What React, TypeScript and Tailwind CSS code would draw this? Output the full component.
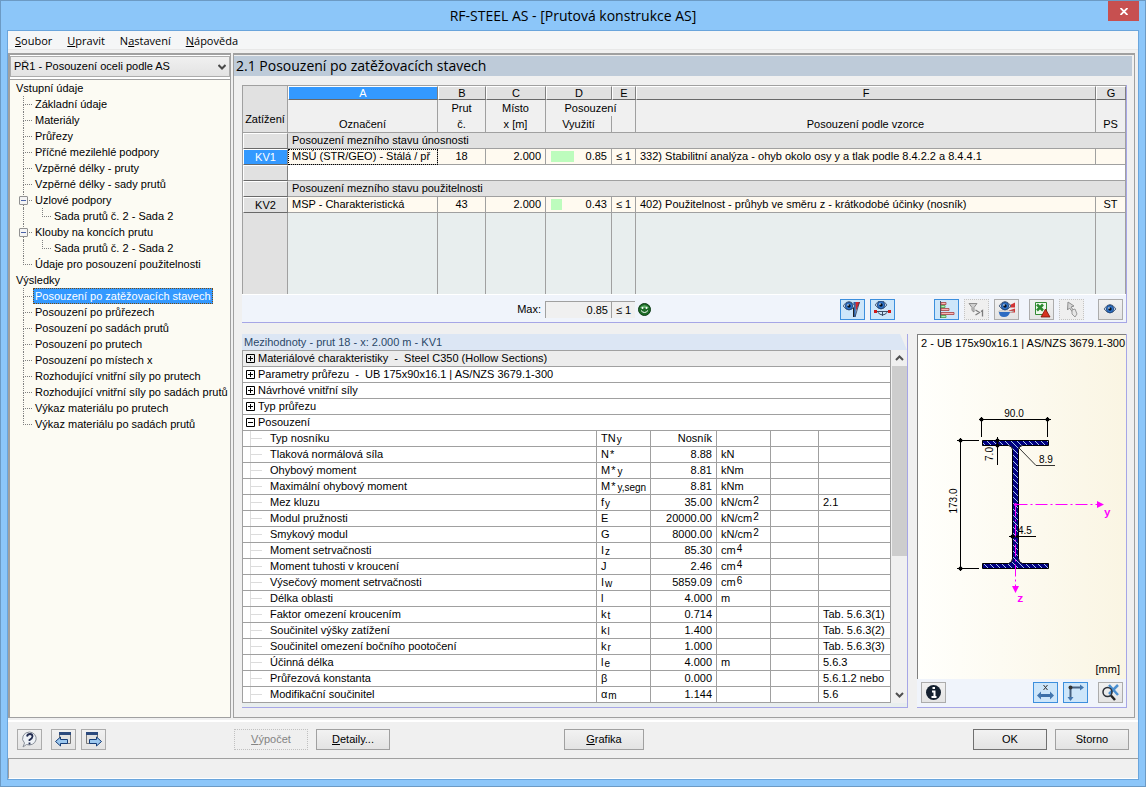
import { useState } from "react"
import type { ReactNode } from "react"
import clsx from "clsx"

type TreeNode = { label: string; children?: string[] }

const inputData: TreeNode[] = [
  { label: "Základní údaje" },
  { label: "Materiály" },
  { label: "Průřezy" },
  { label: "Příčné mezilehlé podpory" },
  { label: "Vzpěrné délky - pruty" },
  { label: "Vzpěrné délky - sady prutů" },
  { label: "Uzlové podpory", children: ["Sada prutů č. 2 - Sada 2"] },
  { label: "Klouby na koncích prutu", children: ["Sada prutů č. 2 - Sada 2"] },
  { label: "Údaje pro posouzení použitelnosti" },
]

const results: TreeNode[] = [
  { label: "Posouzení po zatěžovacích stavech" },
  { label: "Posouzení po průřezech" },
  { label: "Posouzení po sadách prutů" },
  { label: "Posouzení po prutech" },
  { label: "Posouzení po místech x" },
  { label: "Rozhodující vnitřní síly po prutech" },
  { label: "Rozhodující vnitřní síly po sadách prutů" },
  { label: "Výkaz materiálu po prutech" },
  { label: "Výkaz materiálu po sadách prutů" },
]

const groups = ["Materiálové charakteristiky  -  Steel C350 (Hollow Sections)", "Parametry průřezu  -  UB 175x90x16.1 | AS/NZS 3679.1-300", "Návrhové vnitřní síly", "Typ průřezu"]

type Detail = { name: string; sym: string; star?: boolean; sub?: string; value: string; unit?: string; exp?: string; ref?: string }

const details: Detail[] = [
  { name: "Typ nosníku", sym: "TN", sub: "y", value: "Nosník" },
  { name: "Tlaková normálová síla", sym: "N", star: true, value: "8.88", unit: "kN" },
  { name: "Ohybový moment", sym: "M", star: true, sub: "y", value: "8.81", unit: "kNm" },
  { name: "Maximální ohybový moment", sym: "M", star: true, sub: "y,segn", value: "8.81", unit: "kNm" },
  { name: "Mez kluzu", sym: "f", sub: "y", value: "35.00", unit: "kN/cm", exp: "2", ref: "2.1" },
  { name: "Modul pružnosti", sym: "E", value: "20000.00", unit: "kN/cm", exp: "2" },
  { name: "Smykový modul", sym: "G", value: "8000.00", unit: "kN/cm", exp: "2" },
  { name: "Moment setrvačnosti", sym: "I", sub: "z", value: "85.30", unit: "cm", exp: "4" },
  { name: "Moment tuhosti v kroucení", sym: "J", value: "2.46", unit: "cm", exp: "4" },
  { name: "Výsečový moment setrvačnosti", sym: "I", sub: "w", value: "5859.09", unit: "cm", exp: "6" },
  { name: "Délka oblasti", sym: "l", value: "4.000", unit: "m" },
  { name: "Faktor omezení kroucením", sym: "k", sub: "t", value: "0.714", ref: "Tab. 5.6.3(1)" },
  { name: "Součinitel výšky zatížení", sym: "k", sub: "l", value: "1.400", ref: "Tab. 5.6.3(2)" },
  { name: "Součinitel omezení bočního pootočení", sym: "k", sub: "r", value: "1.000", ref: "Tab. 5.6.3(3)" },
  { name: "Účinná délka", sym: "l", sub: "e", value: "4.000", unit: "m", ref: "5.6.3" },
  { name: "Průřezová konstanta", sym: "β", value: "0.000", ref: "5.6.1.2 nebo" },
  { name: "Modifikační součinitel", sym: "α", sub: "m", value: "1.144", ref: "5.6" },
]

const cell = "border-r border-b border-[#a0a0a0] p-0 font-normal whitespace-nowrap overflow-hidden"
const raised = "border-t border-l border-r border-b border-t-white border-l-white border-r-[#808080] border-b-[#696969] p-0 font-normal"

function IconButton({ label, active, disabled, children }: { label: string; active?: boolean; disabled?: boolean; children: ReactNode }) {
  return (
    <button
      type="button"
      aria-label={label}
      disabled={disabled}
      className={clsx(
        "flex h-[21px] w-[25px] shrink-0 items-center justify-center border",
        active && "border-[#3c8fdd] bg-[#cde6fa]",
        disabled && "border-dotted border-[#c4c4c4] bg-[#efefef]",
        !active && !disabled && "border-[#acacac] bg-linear-to-b from-[#f1f1f1] to-[#e4e4e4]",
      )}
    >
      <svg width="19" height="17" viewBox="0 0 19 17" fill="none">
        {children}
      </svg>
    </button>
  )
}

const Eye = ({ x = 9, y = 8 }: { x?: number; y?: number }) => (
  <g>
    <path d={`M${x - 6} ${y}q6 -9 12 0q-6 8 -12 0z`} fill="#b9cce4" stroke="#4a5d7a" strokeWidth=".9" />
    <circle cx={x} cy={y} r="3.700" fill="#2f75cc" stroke="#143768" strokeWidth=".7" />
    <circle cx={x} cy={y} r="1.700" fill="#07101f" />
    <circle cx={x - 1} cy={y - 1} r=".8" fill="#fff" />
  </g>
)

function PushButton({ children, disabled, wide, primary }: { children: ReactNode; disabled?: boolean; wide?: boolean; primary?: boolean }) {
  return (
    <button
      type="button"
      disabled={disabled}
      className={clsx(
        "h-[21px] border text-center leading-[19px]",
        wide ? "w-20" : "w-[74px]",
        disabled ? "border-dotted border-[#c0c0c0] bg-[#efefef] text-[#838383]" : "bg-linear-to-b from-[#f2f2f2] to-[#e3e3e3]",
        !disabled && (primary ? "border-[#707070]" : "border-[#a0a0a0]"),
      )}
    >
      {children}
    </button>
  )
}

function Branch({ last }: { last?: boolean }) {
  return (
    <span className="block h-4 w-[9px] shrink-0">
      <span className="block h-[9px] border-b border-l border-dotted border-[#808080]" />
      {!last && <span className="block h-[7px] border-l border-dotted border-[#808080]" />}
    </span>
  )
}

function Tree({ title, nodes, selected, onSelect }: { title: string; nodes: TreeNode[]; selected: string; onSelect: (s: string) => void }) {
  return (
    <li>
      <div className="h-4 pl-[6px]">{title}</div>
      <ul>
        {nodes.map((node, i) => (
          <li key={node.label}>
            <div className="relative flex h-4 pl-[13px]">
              <Branch last={i === nodes.length - 1} />
              {node.children && (
                <button type="button" aria-label="Sbalit" className="absolute top-1 left-[9px] flex size-[9px] items-center justify-center rounded-[1px] border border-[#919191] bg-[#f4f4f4]">
                  <span className="h-px w-[5px] bg-[#4b63a7]" />
                </button>
              )}
              <button
                type="button"
                onClick={() => onSelect(node.label)}
                className={clsx("ml-px h-4 px-[2px] text-left leading-4", selected === node.label && "bg-[#3399ff] text-white outline-1 -outline-offset-1 outline-dotted outline-[#7a4a10]")}
              >
                {node.label}
              </button>
            </div>
            {node.children?.map((child) => (
              <div key={child} className="flex h-4 pl-[13px]">
                <span className="h-4 w-[19px] border-l border-dotted border-[#808080]" />
                <Branch last />
                <span className="pl-[3px]">{child}</span>
              </div>
            ))}
          </li>
        ))}
      </ul>
    </li>
  )
}

function RowHead({ children, active }: { children?: ReactNode; active?: boolean }) {
  return <th className={clsx(raised, "text-center leading-3", active ? "bg-[#3399ff] text-white" : "bg-[#e1e1e1]")}>{children}</th>
}

type Load = { id: string; name: string; member: string; ratio: string; width: string; formula: string; ps: string; active?: boolean }

function LoadRow({ load }: { load: Load }) {
  return (
    <tr className="h-4 bg-[#fffaf0]">
      <RowHead active={load.active}>{load.id}</RowHead>
      <td className={clsx(cell, "pl-1", load.active && "outline-1 -outline-offset-1 outline-dotted outline-black")}>{load.name}</td>
      <td className={clsx(cell, "text-center")}>{load.member}</td>
      <td className={clsx(cell, "pr-1 text-right")}>2.000</td>
      <td className={cell}>
        <div className="flex items-center justify-between pr-1 pl-[5px]">
          <span className="h-[11px] bg-[#bdfcbd]" style={{ width: load.width }} />
          {load.ratio}
        </div>
      </td>
      <td className={clsx(cell, "text-center")}>≤ 1</td>
      <td className={clsx(cell, "pl-1")}>{load.formula}</td>
      <td className={clsx(cell, "text-center")}>{load.ps}</td>
    </tr>
  )
}

function GroupRow({ title }: { title: string }) {
  return (
    <tr className="h-4 bg-[#e1e1e1]">
      <RowHead />
      <td colSpan={7} className={clsx(cell, "pl-1")}>{title}</td>
    </tr>
  )
}

function LoadTable() {
  return (
    <table className="w-full table-fixed border-separate border-spacing-0 border-t border-l border-[#a0a0a0] leading-[15px]">
      <colgroup>
        <col className="w-[45px]" />
        <col className="w-[150px]" />
        <col className="w-12" />
        <col className="w-[60px]" />
        <col className="w-[66px]" />
        <col className="w-6" />
        <col />
        <col className="w-[30px]" />
      </colgroup>
      <thead className="bg-[#f0f0f0]">
        <tr className="h-[14px] leading-3">
          <th rowSpan={3} className={clsx(cell, "bg-[#e1e1e1] pb-[5px] align-bottom leading-[15px]")}>Zatížení</th>
          {["A", "B", "C", "D", "E", "F", "G"].map((c) => (
            <th key={c} className={clsx(raised, c === "A" ? "bg-[#3399ff] text-white" : "bg-[#e1e1e1]")}>{c}</th>
          ))}
        </tr>
        <tr className="h-4">
          <th className="border-r border-[#a0a0a0] p-0" />
          <th className="border-r border-[#a0a0a0] p-0 font-normal">Prut</th>
          <th className="border-r border-[#a0a0a0] p-0 font-normal">Místo</th>
          <th colSpan={2} className="border-r border-[#a0a0a0] p-0 font-normal">Posouzení</th>
          <th className="border-r border-[#a0a0a0] p-0" />
          <th className="border-r border-[#a0a0a0] p-0" />
        </tr>
        <tr className="h-[17px]">
          <th className={cell}>Označení</th>
          <th className={cell}>č.</th>
          <th className={cell}>x [m]</th>
          <th className={cell}>Využití</th>
          <th className={cell} />
          <th className={cell}>Posouzení podle vzorce</th>
          <th className={cell}>PS</th>
        </tr>
      </thead>
      <tbody>
        <GroupRow title="Posouzení mezního stavu únosnosti" />
        <LoadRow load={{ id: "KV1", name: "MSÚ (STR/GEO) - Stálá / př", member: "18", ratio: "0.85", width: "23px", formula: "332) Stabilitní analýza - ohyb okolo osy y a tlak podle 8.4.2.2 a 8.4.4.1", ps: "", active: true }} />
        <tr className="h-4 bg-white">
          <RowHead />
          <td colSpan={7} className={cell} />
        </tr>
        <GroupRow title="Posouzení mezního stavu použitelnosti" />
        <LoadRow load={{ id: "KV2", name: "MSP - Charakteristická", member: "43", ratio: "0.43", width: "11px", formula: "402) Použitelnost - průhyb ve směru z - krátkodobé účinky (nosník)", ps: "ST" }} />
        <tr className="h-[81px] bg-[#e8eeee]">
          <th className="border-r border-[#a0a0a0] bg-[#e1e1e1]" />
          {["A", "B", "C", "D", "E", "F", "G"].map((c) => (
            <td key={c} className="border-r border-[#a0a0a0]" />
          ))}
        </tr>
      </tbody>
    </table>
  )
}

function LoadToolbar() {
  return (
    <div className="flex h-[28px] items-center border-t border-white bg-[#f0f4fb] pt-[2px] pr-[3px]">
      <label htmlFor="max" className="w-[303px] pr-1 text-right">Max:</label>
      <input id="max" readOnly value="0.85" className="h-[17px] w-[66px] border-t border-l border-[#a0a0a0] bg-[#f0f0f0] pr-[3px] text-right" />
      <output className="h-[17px] w-6 border-t border-l border-[#a0a0a0] bg-[#f0f0f0] text-center leading-4">≤ 1</output>
      <svg className="ml-[3px]" width="13" height="13" viewBox="0 0 13 13">
        <circle cx="6.500" cy="6.500" r="6" fill="#1c6b27" stroke="#0c3a14" />
        <path d="M2 5a5 5 0 0 1 9 0z" fill="#63b06b" />
        <circle cx="4.500" cy="5" r="1" fill="#fff" />
        <circle cx="8.500" cy="5" r="1" fill="#fff" />
        <path d="M3 7.500q3.500 4 7 0" stroke="#fff" fill="none" />
      </svg>
      <div className="ml-auto flex">
        <div className="mr-[39px] flex gap-[5px]">
          <IconButton label="Zobrazit prut" active>
            <path d="M13 1h-2.500v15h2z" fill="#2c63ab" />
            <path d="M12.500 1h4.500l-4 9z" fill="#d2292f" />
            <path d="M16.500 1L12 16" stroke="#2b3a55" strokeWidth=".8" />
            <path d="M10.500 3v13" stroke="#222" />
            <Eye x={6} y={5} />
          </IconButton>
          <IconButton label="Zobrazit průběh" active>
            <Eye x={8} y={4} />
            <path d="M3 10.500h13M4.500 11q5 6 10 0M9.500 11v4" stroke="#3a4c66" />
            <path d="M1 9h3v3H1zM15 9h3v3h-3z" fill="#d11a1a" />
          </IconButton>
        </div>
        <div className="mr-[10px] flex gap-[5px]">
          <IconButton label="Barevné pruhy" active>
            <path d="M3.500 0v17" stroke="#3e5168" />
            <path d="M4 1.500h5v2H4zM4 7.500h8v2H4zM4 11.500h13v2H4z" fill="#f9b4b4" stroke="#a34040" strokeWidth=".8" />
            <path d="M4 4.500h4v2H4zM4 14.500h5v2H4z" fill="#b6f0b6" stroke="#4b9a4b" strokeWidth=".8" />
          </IconButton>
          <IconButton label="Filtr větší než 1" disabled>
            <path d="M2 2.500h8l-3 4v4.500l-2-1.500v-3z" fill="#cfcfcf" stroke="#8d8d8d" />
            <path d="M8.500 9l4 2.500-4 2.500M14 10.500l1.500-1v6" stroke="#7d7d7d" strokeWidth="1.300" />
          </IconButton>
          <IconButton label="Pouze překročené">
            <path d="M12 4.500l6-3v5h-6zM12 9.500l6-2v4h-6z" fill="#d23434" />
            <path d="M2 10h15l-3 1.500H2z" fill="#f2f2f2" stroke="#9a9a9a" strokeWidth=".6" />
            <path d="M2 11h11q-1 5-6 5t-5-5z" fill="#2c6bc2" />
            <Eye x={8} y={5} />
          </IconButton>
        </div>
        <div className="mr-[14px] flex gap-[5px]">
          <IconButton label="Export do Excelu">
            <path d="M3.500 1.500h11v12h-11z" fill="#eef8ec" stroke="#338a34" />
            <path d="M5 3.500l6 6M11 3.500l-6 6" stroke="#2c8a2f" strokeWidth="2.500" />
            <path d="M13.500 8l4.500 8H9z" fill="#d6321f" stroke="#7a1208" strokeWidth=".8" />
          </IconButton>
          <IconButton label="Vybrat" disabled>
            <path d="M6 1l6 4-3 1 3 4-1.500 1-3-4-2 2z" fill="#d6d6d6" stroke="#8f8f8f" />
            <path d="M10 9l3-1 2 5-2 3-3-3z" fill="#e6e6e6" stroke="#999" />
          </IconButton>
        </div>
        <IconButton label="Náhled">
          <Eye x={9} y={8} />
        </IconButton>
      </div>
    </div>
  )
}

function PlusMinus({ open }: { open?: boolean }) {
  return (
    <svg width="9" height="9" viewBox="0 0 9 9" fill="none" stroke="#000">
      <path d="M.5 .5h8v8h-8zM2 4.500h5" />
      {!open && <path d="M4.500 2v5" />}
    </svg>
  )
}

function DetailPanel() {
  return (
    <section className="flex min-w-0 flex-1 flex-col border-r border-b border-[#a6a6e6] bg-[#f0f0f0]">
      <h2 className="h-4 bg-[#dce6f4] pl-[2px] leading-4 text-[#2b4868] [clip-path:polygon(0_0,calc(100%_-_7px)_0,100%_100%,0_100%)]">Mezihodnoty - prut 18 - x: 2.000 m - KV1</h2>
      <div className="flex">
        <table className="min-w-0 flex-1 table-fixed border-separate border-spacing-0 border-t border-l border-[#a0a0a0] bg-white leading-[15px]">
          <colgroup>
            <col />
            <col className="w-[54px]" />
            <col className="w-[66px]" />
            <col className="w-[54px]" />
            <col className="w-12" />
            <col className="w-[72px]" />
          </colgroup>
          <tbody>
            {groups.concat("Posouzení").map((g, i) => (
              <tr key={g} className={clsx("h-4", i === 0 && "bg-[#ececec]")}>
                <td colSpan={6} className={cell}>
                  <button type="button" className="flex items-center gap-[3px] pl-[3px] whitespace-pre">
                    <PlusMinus open={i === 4} />
                    {g}
                  </button>
                </td>
              </tr>
            ))}
            {details.map((d) => (
              <tr key={d.name} className="h-4">
                <td className={cell}>
                  <div className="flex">
                    <span className="ml-[7px] h-[15px] w-3 border-l border-[#dcdcdc]">
                      <span className="block h-2 border-b border-[#dcdcdc]" />
                    </span>
                    <span className="pl-2">{d.name}</span>
                  </div>
                </td>
                <td className={clsx(cell, "pl-1")}>
                  <div className="flex h-[15px]">
                    {d.sym}
                    {d.star && <span className="px-px">*</span>}
                    {d.sub && <span className="pt-[3px] pl-px text-[10px] leading-3">{d.sub}</span>}
                  </div>
                </td>
                <td className={clsx(cell, "pr-1 text-right")}>{d.value}</td>
                <td className={clsx(cell, "pl-1")}>
                  <div className="flex h-[15px]">
                    {d.unit}
                    {d.exp && <span className="pl-px text-[10px] leading-3">{d.exp}</span>}
                  </div>
                </td>
                <td className={cell} />
                <td className={clsx(cell, "pl-1")}>{d.ref}</td>
              </tr>
            ))}
          </tbody>
        </table>
        <div className="flex w-4 flex-col items-center">
          <svg className="shrink-0" width="16" height="16" viewBox="0 0 16 16" fill="none">
            <path d="M5 10l3.500-3.500L12 10" stroke="#505050" strokeWidth="2" />
          </svg>
          <div className="h-[190px] w-[15px] bg-[#cdcdcd]" />
          <svg className="mt-auto" width="16" height="16" viewBox="0 0 16 16" fill="none">
            <path d="M5 6l3.500 3.500L12 6" stroke="#505050" strokeWidth="2" />
          </svg>
        </div>
      </div>
      <div className="h-1 bg-[#e8eeee]" />
    </section>
  )
}

function CrossSection() {
  return (
    <svg className="block" width="208" height="308" viewBox="918 352 208 308" fontFamily="'Liberation Sans', Arial, sans-serif" fontSize="10">
      <defs>
        <pattern id="hatch" width="6" height="6" patternUnits="userSpaceOnUse">
          <rect width="6" height="6" fill="#000080" />
          <path d="M0 0l6 6" stroke="#a9c8ec" />
        </pattern>
      </defs>
      <path d="M982.500 440.500h66v5h-26q-4 .5-4 4v109q0 4 4 5h26v5h-66v-5h26q4-1 4-5v-109q0-3.500-4-4h-26z" fill="url(#hatch)" stroke="#000" />
      <g stroke="#000" fill="none">
        <path d="M979 419.500h72M981.500 417v20M1047.500 417v20" />
        <path d="M960.500 438v133M957 440.500h22M957 568.500h22" />
        <path d="M997.500 437v28" />
        <path d="M1019 448l17 17.500h19" strokeWidth=".8" />
        <path d="M1009 536.500h27" />
      </g>
      <g fill="#000">
        <circle cx="981.500" cy="419.500" r="2" />
        <circle cx="1047.500" cy="419.500" r="2" />
        <circle cx="960.500" cy="440.500" r="2" />
        <circle cx="960.500" cy="568.500" r="2" />
        <circle cx="997.500" cy="440.500" r="2" />
        <circle cx="997.500" cy="445.500" r="2" />
        <circle cx="1012.500" cy="536.500" r="2" />
        <circle cx="1017.500" cy="536.500" r="1.500" />
        <text x="1014" y="417" textAnchor="middle">90.0</text>
        <text x="1039" y="463">8.9</text>
        <text x="1018" y="534">4.5</text>
        <text transform="translate(957 501) rotate(-90)" textAnchor="middle">173.0</text>
        <text transform="translate(993 454) rotate(-90)" textAnchor="middle">7.0</text>
      </g>
      <g stroke="#f0f" fill="#f0f">
        <path d="M1015.500 504.500h82" strokeDasharray="12 3 2 3" />
        <path d="M1015.500 504.500v82" strokeDasharray="12 3 2 3" />
        <circle cx="1015.500" cy="504.500" r="1.500" stroke="none" />
        <path d="M1097 501l7 3.500-7 3.500zM1012 586l3.500 7 3.500-7z" stroke="none" />
        <text x="1104" y="516" stroke="none" fontFamily="'Liberation Mono', monospace" fontWeight="bold" fontSize="11">y</text>
        <text x="1017" y="602" stroke="none" fontFamily="'Liberation Mono', monospace" fontWeight="bold" fontSize="11">z</text>
      </g>
    </svg>
  )
}

function SectionPanel() {
  return (
    <section className="flex w-[210px] shrink-0 flex-col border-r border-b border-[#a6a6e6]">
      <div className="flex flex-1 flex-col border-t border-l border-[#808080] bg-linear-to-r from-[#fffffc] to-[#faf5e3]">
        <h2 className="h-[17px] pl-[3px] leading-[17px] whitespace-nowrap">2 - UB 175x90x16.1 | AS/NZS 3679.1-300</h2>
        <CrossSection />
        <div className="mt-auto pr-[6px] text-right leading-[19px]">[mm]</div>
      </div>
      <div className="flex h-[28px] items-center bg-[#f0f4fb] pr-[3px] pb-px pl-1">
        <IconButton label="Informace">
          <circle cx="9.500" cy="8.500" r="7.500" fill="#14202f" />
          <path d="M8 7.500h2.500V13M7.500 13h5M8.500 4h2.500" stroke="#fff" strokeWidth="2" />
        </IconButton>
        <div className="mr-[10px] ml-auto flex gap-[5px]">
          <IconButton label="Kóty" active>
            <path d="M7.500 1l4 5M11.500 1l-4 5" stroke="#333" />
            <path d="M4 11.500h11" stroke="#3c6fa8" strokeWidth="3" />
            <path d="M1 11.500l4-4v8zM18 11.500l-4-4v8z" fill="#4376ae" />
          </IconButton>
          <IconButton label="Osy" active>
            <path d="M4.500 14V3.500H15" stroke="#46607f" strokeWidth="2" />
            <path d="M18 3.500l-4-3v6zM4.500 17l-3-4h6z" fill="#4376ae" />
            <circle cx="4.500" cy="3.500" r="2" fill="#333" />
          </IconButton>
        </div>
        <IconButton label="Celý průřez">
          <path d="M8 1l9 10M17 1L8 10" stroke="#4a8fd0" strokeWidth="2.500" />
          <circle cx="6.500" cy="8" r="4.500" stroke="#2a2f38" strokeWidth="1.500" />
          <path d="M10 11.500l4 4.500" stroke="#222" strokeWidth="2.500" />
        </IconButton>
      </div>
    </section>
  )
}

function Footer() {
  return (
    <footer>
      <div className="flex h-[38px] items-start border-t-2 border-white px-[9px] pt-[7px]">
        <div className="flex w-[217px] gap-[9px]">
          <IconButton label="Nápověda">
            <path d="M9.500 1a7 6.500 0 1 1-3 12.500L3 16l1.500-4A7 6.500 0 0 1 9.500 1z" fill="#eef2f6" stroke="#8a9099" />
            <path d="M7 5.500q.5-2.500 3-2.500t2.500 2.500q0 1.500-3 3.500v1M9.500 11.500v2" stroke="#222c50" strokeWidth="1.800" />
          </IconButton>
          <div className="flex gap-[5px]">
            <IconButton label="Předchozí">
              <path d="M5.500 1.500h11v11h-11z" fill="#e2e2e2" stroke="#777" />
              <path d="M5 1h12v3H5z" fill="#2c4a7d" />
              <path d="M1.500 10.500l5-4.500v2.500h7v4h-7V15z" fill="#9cc8ef" stroke="#173e78" />
            </IconButton>
            <IconButton label="Další">
              <path d="M2.500 1.500h11v11h-11z" fill="#e2e2e2" stroke="#777" />
              <path d="M2 1h12v3H2z" fill="#2c4a7d" />
              <path d="M17.500 10.500l-5-4.500v2.500h-7v4h7V15z" fill="#9cc8ef" stroke="#173e78" />
            </IconButton>
          </div>
        </div>
        <div className="flex gap-2">
          <PushButton disabled><u>V</u>ýpočet</PushButton>
          <PushButton><u>D</u>etaily...</PushButton>
        </div>
        <div className="ml-[174px]">
          <PushButton wide><u>G</u>rafika</PushButton>
        </div>
        <div className="ml-auto flex gap-2">
          <PushButton primary>OK</PushButton>
          <PushButton>Storno</PushButton>
        </div>
      </div>
      <div className="h-[21px] border-t border-b border-l border-[#a0a0a0] border-b-white" />
    </footer>
  )
}

const menu = [["", "S", "oubor"], ["", "U", "pravit"], ["N", "a", "stavení"], ["", "N", "ápověda"]]

const App = () => {
  const [selected, setSelected] = useState("Posouzení po zatěžovacích stavech")

  return (
    <div className="flex min-h-screen flex-col border border-[#6c9ac4] bg-[#8cc6f9] px-[6px] pb-[6px] font-['Liberation_Sans',Arial,sans-serif] text-[11px] text-black">
      <header className="relative flex h-[29px] items-center justify-center">
        <h1 className="font-['Open_Sans','Noto_Sans',sans-serif] text-[14px] leading-5">RF-STEEL AS - [Prutová konstrukce AS]</h1>
        <button type="button" aria-label="Zavřít" className="absolute top-0 right-0 flex h-5 w-[31px] items-center justify-center bg-[#c75050]">
          <svg width="8" height="7" viewBox="0 0 8 7" stroke="#fff" strokeWidth="1.800">
            <path d="M.5 0l7 7M7.500 0l-7 7" />
          </svg>
        </button>
      </header>

      <div className="flex flex-1 flex-col border border-[#6aa5dc] bg-[#f0f0f0]">
        <nav className="flex h-[19px] items-center gap-[15px] border-b border-[#e8e8e8] bg-[#f5f6f7] px-[7px] pt-[2px] font-['Open_Sans','Noto_Sans',sans-serif] text-[11px]">
          {menu.map(([pre, key, rest]) => (
            <button key={rest} type="button">
              {pre}<u>{key}</u>{rest}
            </button>
          ))}
        </nav>

        <main className="mt-[3px] flex flex-1 gap-[2px] pr-[3px] pb-[2px]">
          <aside className="flex w-[223px] shrink-0 flex-col border-t-2 border-r border-b border-l-2 border-[#a0a0a0] bg-white">
            <div className="relative mt-px h-[22px]">
              <select aria-label="Případ" className="h-[21px] w-full appearance-none border border-[#acacac] bg-linear-to-b from-[#f0f0f0] to-[#e3e3e3] pl-[3px] text-[11px]">
                <option>PŘ1 - Posouzení oceli podle AS</option>
              </select>
              <svg className="pointer-events-none absolute top-[8px] right-1" width="8" height="6" viewBox="0 0 8 6" fill="none">
                <path d="M.5 1L4 4.500 7.500 1" stroke="#484848" strokeWidth="2" />
              </svg>
            </div>
            <ul className="mt-px flex-1 border-t border-[#a0a0a0] bg-[#fcfbf3] leading-4">
              <Tree title="Vstupní údaje" nodes={inputData} selected={selected} onSelect={setSelected} />
              <Tree title="Výsledky" nodes={results} selected={selected} onSelect={setSelected} />
            </ul>
          </aside>

          <div className="flex min-w-0 flex-1 flex-col border-t-2 border-r border-b border-l border-[#a0a0a0]">
            <h2 className="mt-px mr-[2px] h-5 bg-[#becbd9] pl-[2px] font-['Open_Sans','Noto_Sans',sans-serif] text-[14px] leading-5">2.1 Posouzení po zatěžovacích stavech</h2>
            <div className="flex flex-1 flex-col pt-[9px] pr-[7px] pb-[9px] pl-2">
              <section className="border-r border-b border-[#a6a6e6]">
                <LoadTable />
                <LoadToolbar />
              </section>
              <div className="mt-[11px] flex flex-1 gap-[9px]">
                <DetailPanel />
                <SectionPanel />
              </div>
            </div>
          </div>
        </main>

        <Footer />
      </div>
    </div>
  )
}

export default App
